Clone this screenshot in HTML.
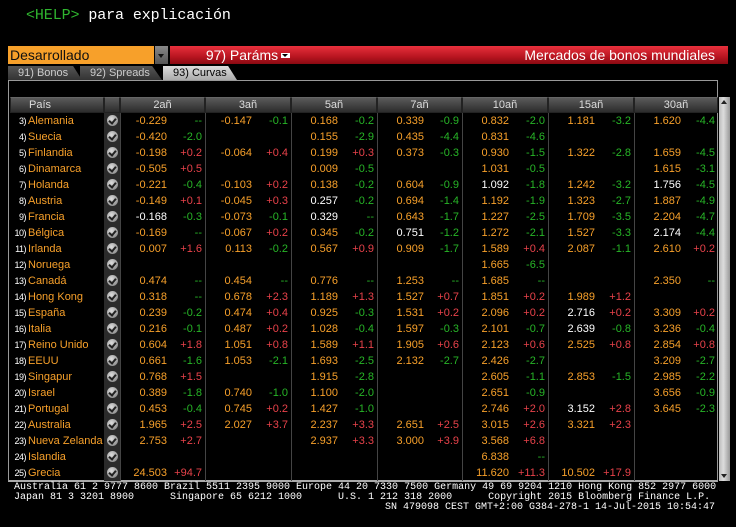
<!DOCTYPE html>
<html><head><meta charset="utf-8"><style>
*{margin:0;padding:0;box-sizing:border-box}
body{width:736px;height:527px;background:#000;position:relative;overflow:hidden;font-family:"Liberation Sans",sans-serif;color:#fff}
.help{position:absolute;left:26px;top:7px;font:15px "Liberation Mono",monospace;color:#fff;letter-spacing:-0.1px}
.help span{color:#2fb52f}
.dd{position:absolute;left:8px;top:46px;width:146px;height:18px;background:#f7a02a;color:#111;font-size:14px;line-height:18px;padding-left:2px}
.dda{position:absolute;left:155px;top:46px;width:13px;height:18px;background:linear-gradient(#888,#555);}
.dda:after{content:"";position:absolute;left:3px;top:8px;border:3.5px solid transparent;border-top:4px solid #111}
.red{position:absolute;left:170px;top:46px;width:558px;height:18px;background:linear-gradient(#e8303c,#b81520 60%,#8a0a12);font-size:14px;line-height:18px}
.red .l{position:absolute;left:27px;top:0;width:90px;text-align:center}
.red .a{position:absolute;left:111px;top:7px;width:9px;height:5px;background:#fff}
.red .a:after{content:"";position:absolute;left:1px;top:1px;border:3.5px solid transparent;border-top:3px solid #000;border-bottom:0}
.red .rt{position:absolute;right:13px;top:0;font-size:14px}
.tab{position:absolute;top:66px;height:14px;font-size:11px;line-height:14px;color:#ccc;background:linear-gradient(#555,#333);clip-path:polygon(0 0,88% 0,100% 100%,0 100%);padding-left:10px}
.tab.s{background:linear-gradient(#ddd,#aaa);color:#000}
.frame{position:absolute;left:8px;top:80px;width:710px;height:402px;border:1px solid #999;border-bottom:2px solid #aaa}
.hdr{position:absolute;left:10px;top:97px;height:16px;display:flex}
.hdr div{height:16px;background:linear-gradient(#5a5a5a,#2c2c2c);border:1px solid #222;border-top-color:#666;font-size:11px;line-height:14px;text-align:center;color:#ddd}
.rows{position:absolute;left:10px;top:113px}
.r{display:flex;height:16px;font-size:11px;line-height:16px}
.p{width:94px;color:#f7a02a;white-space:nowrap;overflow:hidden}
.p i{font-style:normal;color:#fff;display:inline-block;width:16px;text-align:right;margin-right:2px;font-size:9px;letter-spacing:-0.5px}
.ic{width:16px;background:#2a2a2a;position:relative}
.ic:after{content:"";position:absolute;left:3px;top:2px;width:11px;height:11px;border-radius:50%;background:radial-gradient(circle at 40% 35%,#ddd,#777)}
.ic:before{content:"";position:absolute;left:6px;top:4px;width:3px;height:5px;border:solid #222;border-width:0 2px 2px 0;transform:rotate(40deg);z-index:2}
.c{border-left:1px solid #444;display:flex;height:16px}
.c .v,.c .w{width:46px;text-align:right;color:#f7a02a}
.c .w{color:#fff}
.c .g,.c .d{flex:1;text-align:right;padding-right:3px;color:#27b527}
.c .d{color:#e8424a}
.c1{width:85px}.c2{width:86px}.c3{width:86px}.c4{width:85px}.c5{width:86px}.c6{width:86px}.c7{width:84px}
.sb{position:absolute;left:719px;top:97px;width:11px;height:384px;background:linear-gradient(90deg,#bbb,#ddd 40%,#999)}
.sb:before{content:"";position:absolute;left:2px;top:3px;border:3.5px solid transparent;border-bottom:4px solid #222;border-top:0}
.sb:after{content:"";position:absolute;left:2px;bottom:3px;border:3.5px solid transparent;border-top:4px solid #222;border-bottom:0}
.ft{position:absolute;left:14px;font:10px "Liberation Mono",monospace;color:#fff;white-space:pre;line-height:10px}
</style></head><body>
<div class="help"><span>&lt;HELP&gt;</span> para explicación</div>
<div class="dd">Desarrollado</div><div class="dda"></div>
<div class="red"><div class="l">97) Paráms</div><div class="a"></div><div class="rt">Mercados de bonos mundiales</div></div>
<div class="tab" style="left:8px;width:74px">91) Bonos</div>
<div class="tab" style="left:80px;width:82px">92) Spreads</div>
<div class="tab s" style="left:163px;width:74px">93) Curvas</div>
<div class="frame"></div>
<div class="hdr"><div style="width:94px;text-align:left;padding-left:18px">País</div><div style="width:16px"></div><div class="c1">2añ</div><div class="c2">3añ</div><div class="c3">5añ</div><div class="c4">7añ</div><div class="c5">10añ</div><div class="c6">15añ</div><div class="c7">30añ</div></div>
<div class="rows">
<div class="r"><div class="p"><i>3)</i>Alemania</div><div class="ic"></div><div class="c c1"><span class="v">-0.229</span><span class="g">--</span></div><div class="c c2"><span class="v">-0.147</span><span class="g">-0.1</span></div><div class="c c3"><span class="v">0.168</span><span class="g">-0.2</span></div><div class="c c4"><span class="v">0.339</span><span class="g">-0.9</span></div><div class="c c5"><span class="v">0.832</span><span class="g">-2.0</span></div><div class="c c6"><span class="v">1.181</span><span class="g">-3.2</span></div><div class="c c7"><span class="v">1.620</span><span class="g">-4.4</span></div></div>
<div class="r"><div class="p"><i>4)</i>Suecia</div><div class="ic"></div><div class="c c1"><span class="v">-0.420</span><span class="g">-2.0</span></div><div class="c c2"></div><div class="c c3"><span class="v">0.155</span><span class="g">-2.9</span></div><div class="c c4"><span class="v">0.435</span><span class="g">-4.4</span></div><div class="c c5"><span class="v">0.831</span><span class="g">-4.6</span></div><div class="c c6"></div><div class="c c7"></div></div>
<div class="r"><div class="p"><i>5)</i>Finlandia</div><div class="ic"></div><div class="c c1"><span class="v">-0.198</span><span class="d">+0.2</span></div><div class="c c2"><span class="v">-0.064</span><span class="d">+0.4</span></div><div class="c c3"><span class="v">0.199</span><span class="d">+0.3</span></div><div class="c c4"><span class="v">0.373</span><span class="g">-0.3</span></div><div class="c c5"><span class="v">0.930</span><span class="g">-1.5</span></div><div class="c c6"><span class="v">1.322</span><span class="g">-2.8</span></div><div class="c c7"><span class="v">1.659</span><span class="g">-4.5</span></div></div>
<div class="r"><div class="p"><i>6)</i>Dinamarca</div><div class="ic"></div><div class="c c1"><span class="v">-0.505</span><span class="d">+0.5</span></div><div class="c c2"></div><div class="c c3"><span class="v">0.009</span><span class="g">-0.5</span></div><div class="c c4"></div><div class="c c5"><span class="v">1.031</span><span class="g">-0.5</span></div><div class="c c6"></div><div class="c c7"><span class="v">1.615</span><span class="g">-3.1</span></div></div>
<div class="r"><div class="p"><i>7)</i>Holanda</div><div class="ic"></div><div class="c c1"><span class="v">-0.221</span><span class="g">-0.4</span></div><div class="c c2"><span class="v">-0.103</span><span class="d">+0.2</span></div><div class="c c3"><span class="v">0.138</span><span class="g">-0.2</span></div><div class="c c4"><span class="v">0.604</span><span class="g">-0.9</span></div><div class="c c5"><span class="w">1.092</span><span class="g">-1.8</span></div><div class="c c6"><span class="v">1.242</span><span class="g">-3.2</span></div><div class="c c7"><span class="w">1.756</span><span class="g">-4.5</span></div></div>
<div class="r"><div class="p"><i>8)</i>Austria</div><div class="ic"></div><div class="c c1"><span class="v">-0.149</span><span class="d">+0.1</span></div><div class="c c2"><span class="v">-0.045</span><span class="d">+0.3</span></div><div class="c c3"><span class="w">0.257</span><span class="g">-0.2</span></div><div class="c c4"><span class="v">0.694</span><span class="g">-1.4</span></div><div class="c c5"><span class="v">1.192</span><span class="g">-1.9</span></div><div class="c c6"><span class="v">1.323</span><span class="g">-2.7</span></div><div class="c c7"><span class="v">1.887</span><span class="g">-4.9</span></div></div>
<div class="r"><div class="p"><i>9)</i>Francia</div><div class="ic"></div><div class="c c1"><span class="w">-0.168</span><span class="g">-0.3</span></div><div class="c c2"><span class="v">-0.073</span><span class="g">-0.1</span></div><div class="c c3"><span class="w">0.329</span><span class="g">--</span></div><div class="c c4"><span class="v">0.643</span><span class="g">-1.7</span></div><div class="c c5"><span class="v">1.227</span><span class="g">-2.5</span></div><div class="c c6"><span class="v">1.709</span><span class="g">-3.5</span></div><div class="c c7"><span class="v">2.204</span><span class="g">-4.7</span></div></div>
<div class="r"><div class="p"><i>10)</i>Bélgica</div><div class="ic"></div><div class="c c1"><span class="v">-0.169</span><span class="g">--</span></div><div class="c c2"><span class="v">-0.067</span><span class="d">+0.2</span></div><div class="c c3"><span class="v">0.345</span><span class="g">-0.2</span></div><div class="c c4"><span class="w">0.751</span><span class="g">-1.2</span></div><div class="c c5"><span class="v">1.272</span><span class="g">-2.1</span></div><div class="c c6"><span class="v">1.527</span><span class="g">-3.3</span></div><div class="c c7"><span class="w">2.174</span><span class="g">-4.4</span></div></div>
<div class="r"><div class="p"><i>11)</i>Irlanda</div><div class="ic"></div><div class="c c1"><span class="v">0.007</span><span class="d">+1.6</span></div><div class="c c2"><span class="v">0.113</span><span class="g">-0.2</span></div><div class="c c3"><span class="v">0.567</span><span class="d">+0.9</span></div><div class="c c4"><span class="v">0.909</span><span class="g">-1.7</span></div><div class="c c5"><span class="v">1.589</span><span class="d">+0.4</span></div><div class="c c6"><span class="v">2.087</span><span class="g">-1.1</span></div><div class="c c7"><span class="v">2.610</span><span class="d">+0.2</span></div></div>
<div class="r"><div class="p"><i>12)</i>Noruega</div><div class="ic"></div><div class="c c1"></div><div class="c c2"></div><div class="c c3"></div><div class="c c4"></div><div class="c c5"><span class="v">1.665</span><span class="g">-6.5</span></div><div class="c c6"></div><div class="c c7"></div></div>
<div class="r"><div class="p"><i>13)</i>Canadá</div><div class="ic"></div><div class="c c1"><span class="v">0.474</span><span class="g">--</span></div><div class="c c2"><span class="v">0.454</span><span class="g">--</span></div><div class="c c3"><span class="v">0.776</span><span class="g">--</span></div><div class="c c4"><span class="v">1.253</span><span class="g">--</span></div><div class="c c5"><span class="v">1.685</span><span class="g">--</span></div><div class="c c6"></div><div class="c c7"><span class="v">2.350</span><span class="g">--</span></div></div>
<div class="r"><div class="p"><i>14)</i>Hong Kong</div><div class="ic"></div><div class="c c1"><span class="v">0.318</span><span class="g">--</span></div><div class="c c2"><span class="v">0.678</span><span class="d">+2.3</span></div><div class="c c3"><span class="v">1.189</span><span class="d">+1.3</span></div><div class="c c4"><span class="v">1.527</span><span class="d">+0.7</span></div><div class="c c5"><span class="v">1.851</span><span class="d">+0.2</span></div><div class="c c6"><span class="v">1.989</span><span class="d">+1.2</span></div><div class="c c7"></div></div>
<div class="r"><div class="p"><i>15)</i>España</div><div class="ic"></div><div class="c c1"><span class="v">0.239</span><span class="g">-0.2</span></div><div class="c c2"><span class="v">0.474</span><span class="d">+0.4</span></div><div class="c c3"><span class="v">0.925</span><span class="g">-0.3</span></div><div class="c c4"><span class="v">1.531</span><span class="d">+0.2</span></div><div class="c c5"><span class="v">2.096</span><span class="d">+0.2</span></div><div class="c c6"><span class="w">2.716</span><span class="d">+0.2</span></div><div class="c c7"><span class="v">3.309</span><span class="d">+0.2</span></div></div>
<div class="r"><div class="p"><i>16)</i>Italia</div><div class="ic"></div><div class="c c1"><span class="v">0.216</span><span class="g">-0.1</span></div><div class="c c2"><span class="v">0.487</span><span class="d">+0.2</span></div><div class="c c3"><span class="v">1.028</span><span class="g">-0.4</span></div><div class="c c4"><span class="v">1.597</span><span class="g">-0.3</span></div><div class="c c5"><span class="v">2.101</span><span class="g">-0.7</span></div><div class="c c6"><span class="w">2.639</span><span class="g">-0.8</span></div><div class="c c7"><span class="v">3.236</span><span class="g">-0.4</span></div></div>
<div class="r"><div class="p"><i>17)</i>Reino Unido</div><div class="ic"></div><div class="c c1"><span class="v">0.604</span><span class="d">+1.8</span></div><div class="c c2"><span class="v">1.051</span><span class="d">+0.8</span></div><div class="c c3"><span class="v">1.589</span><span class="d">+1.1</span></div><div class="c c4"><span class="v">1.905</span><span class="d">+0.6</span></div><div class="c c5"><span class="v">2.123</span><span class="d">+0.6</span></div><div class="c c6"><span class="v">2.525</span><span class="d">+0.8</span></div><div class="c c7"><span class="v">2.854</span><span class="d">+0.8</span></div></div>
<div class="r"><div class="p"><i>18)</i>EEUU</div><div class="ic"></div><div class="c c1"><span class="v">0.661</span><span class="g">-1.6</span></div><div class="c c2"><span class="v">1.053</span><span class="g">-2.1</span></div><div class="c c3"><span class="v">1.693</span><span class="g">-2.5</span></div><div class="c c4"><span class="v">2.132</span><span class="g">-2.7</span></div><div class="c c5"><span class="v">2.426</span><span class="g">-2.7</span></div><div class="c c6"></div><div class="c c7"><span class="v">3.209</span><span class="g">-2.7</span></div></div>
<div class="r"><div class="p"><i>19)</i>Singapur</div><div class="ic"></div><div class="c c1"><span class="v">0.768</span><span class="d">+1.5</span></div><div class="c c2"></div><div class="c c3"><span class="v">1.915</span><span class="g">-2.8</span></div><div class="c c4"></div><div class="c c5"><span class="v">2.605</span><span class="g">-1.1</span></div><div class="c c6"><span class="v">2.853</span><span class="g">-1.5</span></div><div class="c c7"><span class="v">2.985</span><span class="g">-2.2</span></div></div>
<div class="r"><div class="p"><i>20)</i>Israel</div><div class="ic"></div><div class="c c1"><span class="v">0.389</span><span class="g">-1.8</span></div><div class="c c2"><span class="v">0.740</span><span class="g">-1.0</span></div><div class="c c3"><span class="v">1.100</span><span class="g">-2.0</span></div><div class="c c4"></div><div class="c c5"><span class="v">2.651</span><span class="g">-0.9</span></div><div class="c c6"></div><div class="c c7"><span class="v">3.656</span><span class="g">-0.9</span></div></div>
<div class="r"><div class="p"><i>21)</i>Portugal</div><div class="ic"></div><div class="c c1"><span class="v">0.453</span><span class="g">-0.4</span></div><div class="c c2"><span class="v">0.745</span><span class="d">+0.2</span></div><div class="c c3"><span class="v">1.427</span><span class="g">-1.0</span></div><div class="c c4"></div><div class="c c5"><span class="v">2.746</span><span class="d">+2.0</span></div><div class="c c6"><span class="w">3.152</span><span class="d">+2.8</span></div><div class="c c7"><span class="v">3.645</span><span class="g">-2.3</span></div></div>
<div class="r"><div class="p"><i>22)</i>Australia</div><div class="ic"></div><div class="c c1"><span class="v">1.965</span><span class="d">+2.5</span></div><div class="c c2"><span class="v">2.027</span><span class="d">+3.7</span></div><div class="c c3"><span class="v">2.237</span><span class="d">+3.3</span></div><div class="c c4"><span class="v">2.651</span><span class="d">+2.5</span></div><div class="c c5"><span class="v">3.015</span><span class="d">+2.6</span></div><div class="c c6"><span class="v">3.321</span><span class="d">+2.3</span></div><div class="c c7"></div></div>
<div class="r"><div class="p"><i>23)</i>Nueva Zelanda</div><div class="ic"></div><div class="c c1"><span class="v">2.753</span><span class="d">+2.7</span></div><div class="c c2"></div><div class="c c3"><span class="v">2.937</span><span class="d">+3.3</span></div><div class="c c4"><span class="v">3.000</span><span class="d">+3.9</span></div><div class="c c5"><span class="v">3.568</span><span class="d">+6.8</span></div><div class="c c6"></div><div class="c c7"></div></div>
<div class="r"><div class="p"><i>24)</i>Islandia</div><div class="ic"></div><div class="c c1"></div><div class="c c2"></div><div class="c c3"></div><div class="c c4"></div><div class="c c5"><span class="v">6.838</span><span class="g">--</span></div><div class="c c6"></div><div class="c c7"></div></div>
<div class="r"><div class="p"><i>25)</i>Grecia</div><div class="ic"></div><div class="c c1"><span class="v">24.503</span><span class="d">+94.7</span></div><div class="c c2"></div><div class="c c3"></div><div class="c c4"></div><div class="c c5"><span class="v">11.620</span><span class="d">+11.3</span></div><div class="c c6"><span class="v">10.502</span><span class="d">+17.9</span></div><div class="c c7"></div></div>
</div>
<div class="sb"></div>
<div class="ft" style="top:483px">Australia 61 2 9777 8600 Brazil 5511 2395 9000 Europe 44 20 7330 7500 Germany 49 69 9204 1210 Hong Kong 852 2977 6000</div>
<div class="ft" style="top:493px">Japan 81 3 3201 8900      Singapore 65 6212 1000      U.S. 1 212 318 2000      Copyright 2015 Bloomberg Finance L.P.</div>
<div class="ft" style="top:503px;left:auto;right:21px">SN 479098 CEST GMT+2:00 G384-278-1 14-Jul-2015 10:54:47</div>
</body></html>
